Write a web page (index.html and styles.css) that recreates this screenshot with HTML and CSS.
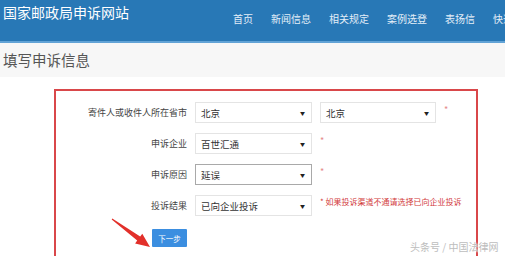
FILE: index.html
```html
<!DOCTYPE html>
<html lang="zh-CN">
<head>
    <meta charset="UTF-8" />
    <title>国家邮政局申诉网站</title>
    <link rel="stylesheet" href="styles.css">
</head>
<body>

<div class="top-bar">
    <div class="site-title">国家邮政局申诉网站</div>
    <ul class="nav">
        <li>首页</li>
        <li>新闻信息</li>
        <li>相关规定</li>
        <li>案例选登</li>
        <li>表扬信</li>
        <li>快递查询</li>
    </ul>
</div>

<div class="page-head">填写申诉信息</div>

<div class="form-wrap">
    <div class="form-box">
        <div class="form-row">
            <div class="label">寄件人或收件人所在省市</div>
            <div class="select">北京<span class="caret">▼</span></div>
            <div class="select">北京<span class="caret">▼</span></div>
            <span class="req">*</span>
        </div>

        <div class="form-row">
            <div class="label">申诉企业</div>
            <div class="select">百世汇通<span class="caret">▼</span></div>
            <span class="req">*</span>
        </div>

        <div class="form-row">
            <div class="label">申诉原因</div>
            <div class="select focused">延误<span class="caret">▼</span></div>
            <span class="req">*</span>
        </div>

        <div class="form-row">
            <div class="label">投诉结果</div>
            <div class="select">已向企业投诉<span class="caret">▼</span></div>
            <span class="hint">* 如果投诉渠道不通请选择已向企业投诉</span>
        </div>

        <div class="form-actions">
            <button class="next-btn">下一步</button>
        </div>
    </div>
</div>

<!-- red pointer drawn over the form -->
<svg class="pointer" width="60" height="50" viewBox="100 210 60 50">
    <polygon points="112.3,218.6 140.2,236.6 142.3,233.7 150,247 135.1,243.5 137.2,240.6 111.7,219.4" fill="#e2302a"/>
</svg>

<div class="watermark">头条号 / 中国法律网</div>

</body>
</html>
```

FILE: styles.css
```css
body, html {
    margin: 0;
    padding: 0;
    width: 505px;
    height: 256px;
    overflow: hidden;
    background: #fff;
    font-family: "Noto Sans CJK SC", "Noto Sans", sans-serif;
    position: relative;
}

.top-bar {
    height: 41px;
    background: #2878b6;
    border-bottom: 2px solid #62a3d6;
    display: flex;
    align-items: flex-start;
    white-space: nowrap;
    overflow: hidden;
}

.site-title {
    color: #fff;
    font-size: 14px;
    line-height: 16px;
    padding: 4px 0 0 3px;
    width: 221px;
    flex-shrink: 0;
}

.nav {
    display: flex;
    list-style: none;
    margin: 0;
    padding: 12px 0 0 0;
}

.nav li {
    color: #e3eef8;
    font-size: 10px;
    line-height: 14px;
    padding: 0 9px;
    flex-shrink: 0;
}

.page-head {
    height: 34px;
    background: #f7f7f7;
    color: #555;
    font-size: 14.5px;
    line-height: 34px;
    padding-left: 3px;
}

.form-wrap {
    padding: 12px 0 0 54px;
}

.form-box {
    width: 420px;
    height: 200px;
    border: 2px solid #d9474a;
    padding-top: 11px;
}

.form-row {
    display: flex;
    align-items: center;
    height: 21px;
    margin-bottom: 10px;
}

.label {
    width: 131px;
    margin-right: 8px;
    text-align: right;
    font-size: 9px;
    color: #444;
}

.select {
    width: 117px;
    height: 21px;
    box-sizing: border-box;
    border: 1px solid #e4e4e4;
    margin-right: 8px;
    display: flex;
    align-items: center;
    justify-content: space-between;
    padding: 0 6px 0 5px;
    font-size: 9.5px;
    color: #333;
}

.select + .select {
    width: 116px;
}

.select.focused {
    border-color: #a9a9a9;
}

.caret {
    font-size: 5px;
    color: #222;
}

.req {
    color: #e58a8a;
    font-size: 9px;
    align-self: flex-start;
    margin-top: 1px;
}

.hint {
    color: #d23c3c;
    font-size: 8px;
    align-self: flex-start;
    margin-top: 1px;
}

.form-actions {
    display: flex;
    padding: 3px 0 0 96px;
}

.next-btn {
    width: 35px;
    height: 18px;
    border: none;
    border-radius: 1px;
    background: #3b8ee0;
    color: #fff;
    font-family: inherit;
    font-size: 7.5px;
    padding: 0;
}

.pointer {
    position: absolute;
    left: 100px;
    top: 210px;
}

.watermark {
    position: absolute;
    left: 410px;
    top: 239px;
    font-size: 10px;
    color: #bdbdbd;
    text-shadow: 0 0 2px #fff, 0 0 2px #fff;
    white-space: nowrap;
}
```
